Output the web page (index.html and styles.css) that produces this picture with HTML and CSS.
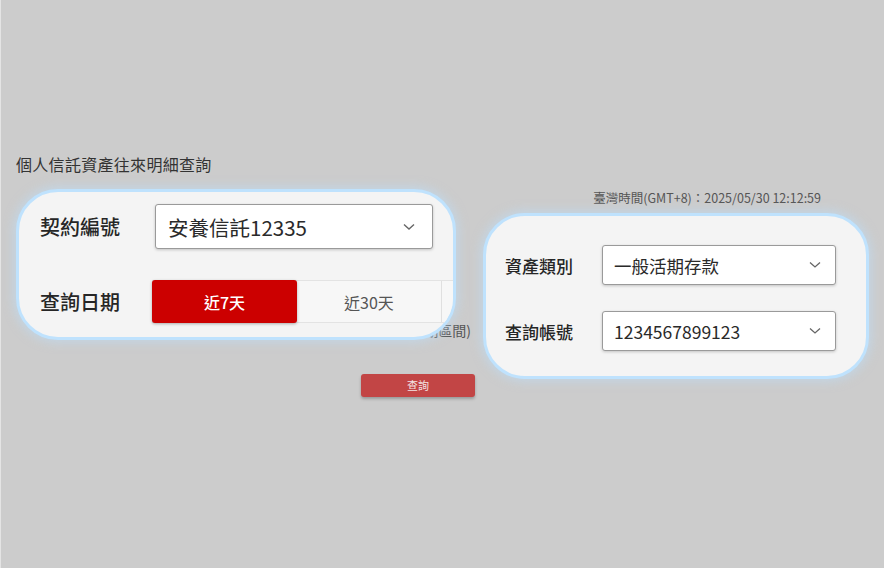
FILE: index.html
```html
<!DOCTYPE html>
<html lang="zh-Hant">
<head>
    <meta charset="UTF-8">
    <meta name="viewport" content="width=device-width, initial-scale=1.0">
    <title>個人信託資產往來明細查詢</title>
    <link rel="stylesheet" href="styles.css">
</head>
<body>
    <!-- underlying page (dimmed) -->
    <div class="page">
        <h1 class="page-title">個人信託資產往來明細查詢</h1>
        <div class="clock">臺灣時間(GMT+8)：2025/05/30 12:12:59</div>
        <div class="range-note">期區間)</div>
        <div class="actions">
            <button class="btn-query">查詢</button>
        </div>
    </div>

    <!-- zoomed callouts -->
    <div class="callout callout-left">
        <div class="form-grid">
            <label class="field-label">契約編號</label>
            <div class="select select-lg">
                <span>安養信託12335</span>
                <svg class="chev" width="12" height="8" viewBox="0 0 12 8"><path d="M1 1.5 L6 6 L11 1.5" fill="none" stroke="#666" stroke-width="1.4"/></svg>
            </div>
            <label class="field-label">查詢日期</label>
            <div class="segment">
                <button class="seg-btn active">近7天</button>
                <button class="seg-btn">近30天</button>
                <div class="seg-btn seg-rest"></div>
            </div>
        </div>
    </div>

    <div class="callout callout-right">
        <div class="form-grid small">
            <label class="field-label">資產類別</label>
            <div class="select">
                <span>一般活期存款</span>
                <svg class="chev" width="12" height="8" viewBox="0 0 12 8"><path d="M1 1.5 L6 6 L11 1.5" fill="none" stroke="#666" stroke-width="1.3"/></svg>
            </div>
            <label class="field-label">查詢帳號</label>
            <div class="select">
                <span>1234567899123</span>
                <svg class="chev" width="12" height="8" viewBox="0 0 12 8"><path d="M1 1.5 L6 6 L11 1.5" fill="none" stroke="#666" stroke-width="1.3"/></svg>
            </div>
        </div>
    </div>
</body>
</html>
```

FILE: styles.css
```css
html {
    background: #cccccc;
}
body {
    margin: 0;
    min-height: 568px;
    border-left: 1px solid #e4e4e4;
    font-family: "Noto Sans CJK TC", "Noto Sans", sans-serif;
    color: #333;
    position: relative;
    overflow: hidden;
}
.page {
    padding: 153px 0 0 15px;
}
.page-title {
    margin: 0;
    font-size: 16px;
    font-weight: 400;
    line-height: 22px;
    color: #333;
    letter-spacing: 0.3px;
}
.clock {
    margin-top: 14px;
    padding-right: 63px;
    text-align: right;
    font-size: 12.5px;
    line-height: 18px;
    color: #555;
}
.range-note {
    margin-top: 113px;
    width: 455px;
    text-align: right;
    font-size: 14px;
    line-height: 20px;
    color: #555;
}
.actions {
    margin-top: 31px;
    padding-left: 345px;
}
.btn-query {
    width: 114px;
    height: 23px;
    border: none;
    border-radius: 3px;
    background: #c24545;
    color: #f3e4e4;
    font-family: inherit;
    font-size: 11px;
    box-shadow: 0 2px 3px rgba(0, 0, 0, 0.25);
}

/* callouts */
.callout {
    position: absolute;
    box-sizing: border-box;
    background: #f4f4f4;
    border: 3px solid #bfe2fd;
    border-radius: 42px;
    overflow: hidden;
    box-shadow: 0 0 10px 3px rgba(190, 220, 245, 0.55);
}
.callout-left {
    left: 15px;
    top: 189px;
    width: 440px;
    height: 151px;
    padding: 12px 0 0 21px;
}
.callout-right {
    left: 482px;
    top: 213px;
    width: 386px;
    height: 166px;
    padding: 29px 0 0 19px;
}
.form-grid {
    display: grid;
    grid-template-columns: 112px auto;
    row-gap: 31px;
    align-items: center;
}
.form-grid.small {
    grid-template-columns: 97px auto;
    row-gap: 26px;
}
.field-label {
    font-size: 20px;
    font-weight: 500;
    color: #262626;
}
.form-grid.small .field-label {
    font-size: 17px;
}
.select {
    box-sizing: border-box;
    width: 234px;
    height: 40px;
    background: #fff;
    border: 1px solid #9a9a9a;
    border-radius: 3px;
    box-shadow: 0 1px 3px rgba(0, 0, 0, 0.2);
    display: flex;
    align-items: center;
    justify-content: space-between;
    padding: 0 14px 0 11px;
    font-size: 17.5px;
    color: #2a2a2a;
}
.select-lg {
    width: 278px;
    height: 45px;
    margin-left: 3px;
    padding: 0 17px 0 12px;
    font-size: 20.5px;
}
.segment {
    display: flex;
    width: 420px;
    border-top: 1px solid #e3e3e3;
    border-bottom: 1px solid #e3e3e3;
    background: #f7f7f7;
}
.seg-btn {
    box-sizing: border-box;
    width: 145px;
    height: 41px;
    flex: none;
    border: none;
    border-right: 1px solid #e0e0e0;
    background: transparent;
    font-family: inherit;
    font-size: 16px;
    color: #555;
}
.seg-btn.active {
    background: #cc0000;
    color: #fff;
    font-weight: 500;
    border-radius: 3px;
    border-right: none;
    box-shadow: 0 1px 3px rgba(0, 0, 0, 0.3);
    margin: -1px 0;
    height: 43px;
}
.seg-rest {
    border-right: none;
}
```
